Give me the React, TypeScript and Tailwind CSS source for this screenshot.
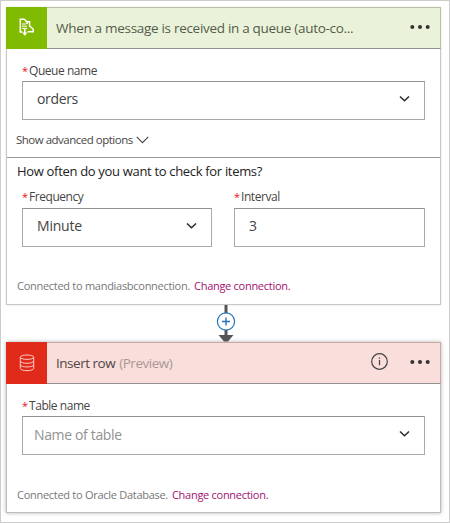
import React from "react";

function Chevron({ className = "" }: { className?: string }) {
  return (
    <svg className={className} width="11" height="8" viewBox="0 0 11 8" fill="none" stroke="#2b2b2b" strokeWidth="1.5">
      <path d="M1 1.5 5.5 5.8 10 1.5" />
    </svg>
  );
}

function Label({ children }: { children: string }) {
  return (
    <div className="flex h-[17px] items-center text-[12px] leading-[17px] text-[#484644]">
      <span className="w-[7px] text-[11px] text-[#e81123]">*</span>
      <span className="tracking-[-0.45px]">{children}</span>
    </div>
  );
}

function Field({ children, dropdown, className = "" }: { children: React.ReactNode; dropdown?: boolean; className?: string }) {
  return (
    <div className={`flex h-[39px] items-center justify-between border border-[#aaa] border-t-[#919191] bg-white pb-[3px] pr-[14px] text-[14px] tracking-[-0.35px] text-[#444] ${className}`}>
      {children}
      {dropdown && <Chevron />}
    </div>
  );
}

function Dots() {
  return (
    <svg className="mb-[2px]" width="20" height="6" viewBox="0 0 20 6" fill="#333">
      <circle cx="2.3" cy="3" r="2" />
      <circle cx="10" cy="3" r="2" />
      <circle cx="17.7" cy="3" r="2" />
    </svg>
  );
}

function Footer({ text }: { text: string }) {
  return (
    <div className="flex h-4 items-center gap-1 pl-[10px] text-[11px] leading-4 tracking-[-0.28px]">
      <span className="text-[#777]">{text}</span>
      <span className="text-[#a0116f]">Change connection.</span>
    </div>
  );
}

export default function App() {
  return (
    <div className="h-[523px] w-[450px] whitespace-nowrap border border-[#cdcdcd] bg-white pl-[5px] pt-[6px] font-['Open_Sans','Noto_Sans',sans-serif]">
      <section className="flex h-[298px] w-[435px] flex-col border border-[#c8c8c8] bg-white shadow-[0_0_2px_rgba(0,0,0,0.12)]">
        <header className="-ml-px -mt-px flex h-[42px] w-[435px] shrink-0 items-center border-b border-r border-t border-b-[#929292] border-r-[#b9c2a9] border-t-[#b9c2a9] bg-[#eaf3d9]">
          <div className="-mt-px flex h-[42px] w-[41px] items-center justify-center bg-[#80ba01]">
            <svg className="-mt-px" width="18" height="20" viewBox="0 0 18 20" fill="none" stroke="white">
              <path d="M4.5 15H2.3V2.2h4L9 5v2" strokeWidth="1.5" />
              <path d="M4 7h4M4 9.2h5M4 11.4h5" strokeWidth="1" />
              <path d="M9 4.8h2.6v4.4L15.2 12v2.8H9.5" strokeWidth="1.5" />
              <path d="M6.8 12v4.5" strokeWidth="1.6" />
              <path d="M4.2 15.5h5.2L6.8 19z" fill="white" stroke="none" />
            </svg>
          </div>
          <h1 className="w-[363px] pl-[9px] text-[13.5px] tracking-[-0.3px] text-[#555b4c]">When a message is received in a queue (auto-co...</h1>
          <Dots />
        </header>
        <div className="px-[15px] pt-[13px]">
          <Label>Queue name</Label>
          <Field dropdown className="mt-[2px] w-[403px] pl-[14px]"><span className="pb-px">orders</span></Field>
        </div>
        <div className="mt-[11px] flex h-[18px] items-center gap-[3px] pl-[9px] text-[11.5px] tracking-[-0.5px] text-[#484644]">
          <span>Show advanced options</span>
          <svg width="13" height="8" viewBox="0 0 13 8" fill="none" stroke="#444" strokeWidth="1.1"><path d="m.7.8 5.8 5.8L12.3.8" /></svg>
        </div>
        <div className="mt-[8px] border-t border-[#999] pl-[10px] pt-[4px] text-[13px] leading-[18px] tracking-[-0.32px] text-[#222]">How often do you want to check for items?</div>
        <div className="flex gap-[22px] px-[15px] pt-[8px]">
          <div>
            <Label>Frequency</Label>
            <Field dropdown className="mt-[3px] w-[190px] pl-[14px]"><span className="pb-px tracking-[-0.2px]">Minute</span></Field>
          </div>
          <div>
            <Label>Interval</Label>
            <Field className="mt-[3px] w-[191px] pl-[14px]"><span className="pb-px">3</span></Field>
          </div>
        </div>
        <div className="mt-[31px]">
          <Footer text="Connected to mandiasbconnection." />
        </div>
      </section>

      <div className="flex h-[37px] justify-center pr-[3px]">
        <svg width="22" height="37" viewBox="0 0 22 37">
          <path d="M11 0v31" stroke="#555" strokeWidth="3" />
          <path d="M3.5 30h15l-5.5 6.5H9z" fill="#555" />
          <circle cx="11" cy="16.5" r="8.6" fill="white" stroke="#2571bd" strokeWidth="1.2" />
          <path d="M7 16.5h8M11 12.5v8" stroke="#2571bd" strokeWidth="1.4" />
        </svg>
      </div>

      <section className="flex h-[171px] w-[435px] flex-col border border-[#bdbdbd] bg-white shadow-[0_0_4px_rgba(0,0,0,0.3)]">
        <header className="-ml-px -mt-px flex h-[42px] w-[435px] shrink-0 items-center border-b border-r border-t border-b-[#929292] border-r-[#c7aaa7] border-t-[#c7aaa7] bg-[#fadedb]">
          <div className="-mt-px flex h-[42px] w-[41px] items-center justify-center bg-[#e02b1b]">
            <svg width="16" height="18" viewBox="0 0 16 18" fill="none" stroke="#ffc9c3" strokeWidth="1">
              <ellipse cx="8" cy="3.2" rx="6.7" ry="2.2" />
              <path d="M1.3 3.2v11.2c0 3 13.4 3 13.4 0V3.2M1.3 7c0 3 13.4 3 13.4 0M1.3 10.7c0 3 13.4 3 13.4 0" />
            </svg>
          </div>
          <h2 className="flex w-[324px] gap-1 pl-[9px] text-[13.5px] tracking-[-0.48px] text-[#514545]"><span>Insert row</span><span className="text-[#a89896]">(Preview)</span></h2>
          <svg className="mb-[3px] mr-[22px]" width="17" height="17" viewBox="0 0 17 17" fill="none" stroke="#444" strokeWidth="1.2">
            <circle cx="8.5" cy="8.5" r="7.8" /><path d="M8.5 7v5.2M8.5 4.5v1.3" />
          </svg>
          <Dots />
        </header>
        <div className="px-[15px] pt-[13px]">
          <Label>Table name</Label>
          <Field dropdown className="mt-[2px] w-[403px] pl-[11px]"><span className="text-[#929292]">Name of table</span></Field>
        </div>
        <div className="mt-[32px]">
          <Footer text="Connected to Oracle Database." />
        </div>
      </section>
    </div>
  );
}
